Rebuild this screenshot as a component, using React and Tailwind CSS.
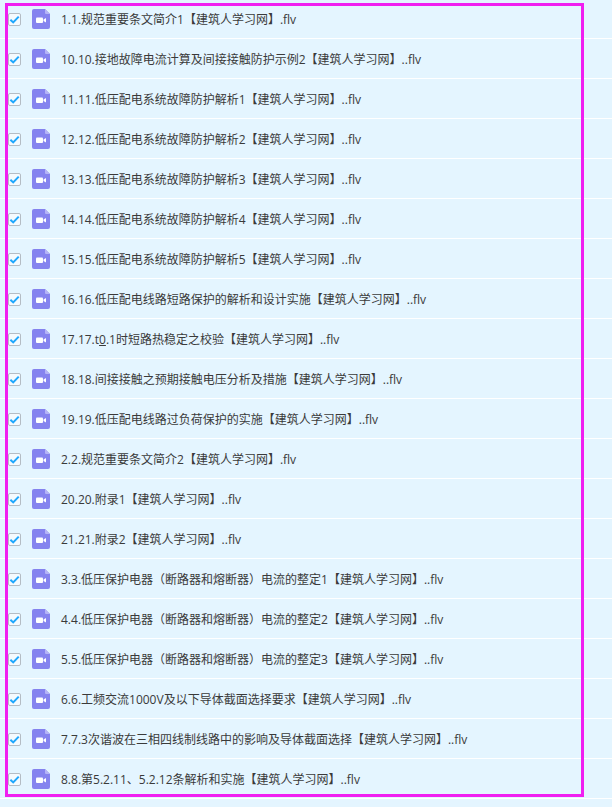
import React from 'react';

const FILES = [
  '1.1.规范重要条文简介1【建筑人学习网】.flv',
  '10.10.接地故障电流计算及间接接触防护示例2【建筑人学习网】..flv',
  '11.11.低压配电系统故障防护解析1【建筑人学习网】..flv',
  '12.12.低压配电系统故障防护解析2【建筑人学习网】..flv',
  '13.13.低压配电系统故障防护解析3【建筑人学习网】..flv',
  '14.14.低压配电系统故障防护解析4【建筑人学习网】..flv',
  '15.15.低压配电系统故障防护解析5【建筑人学习网】..flv',
  '16.16.低压配电线路短路保护的解析和设计实施【建筑人学习网】..flv',
  <>17.17.t<span className="underline">0</span>.1时短路热稳定之校验【建筑人学习网】..flv</>,
  '18.18.间接接触之预期接触电压分析及措施【建筑人学习网】..flv',
  '19.19.低压配电线路过负荷保护的实施【建筑人学习网】..flv',
  '2.2.规范重要条文简介2【建筑人学习网】.flv',
  '20.20.附录1【建筑人学习网】..flv',
  '21.21.附录2【建筑人学习网】..flv',
  '3.3.低压保护电器（断路器和熔断器）电流的整定1【建筑人学习网】..flv',
  '4.4.低压保护电器（断路器和熔断器）电流的整定2【建筑人学习网】..flv',
  '5.5.低压保护电器（断路器和熔断器）电流的整定3【建筑人学习网】..flv',
  '6.6.工频交流1000V及以下导体截面选择要求【建筑人学习网】..flv',
  '7.7.3次谐波在三相四线制线路中的影响及导体截面选择【建筑人学习网】..flv',
  '8.8.第5.2.11、5.2.12条解析和实施【建筑人学习网】..flv',
];

const Checkbox = () => (
  <span className="flex h-[13px] w-[13px] shrink-0 items-center justify-center rounded-[2px] border border-[#b4bcc4] bg-[#f4fafe]">
    <svg viewBox="0 0 12 12" className="h-[11px] w-[11px]">
      <path d="M1.5 6.2 4.6 9.2 10.6 2.8" fill="none" stroke="#1ea7fd" strokeWidth="2.2" />
    </svg>
  </span>
);

const VideoIcon = () => (
  <svg viewBox="0 0 18 20" className="h-5 w-[18px] shrink-0">
    <path d="M2 0H13L18 5V18a2 2 0 0 1-2 2H2a2 2 0 0 1-2-2V2a2 2 0 0 1 2-2Z" fill="#8583ef" />
    <path d="M13 0 18 5H14a1 1 0 0 1-1-1Z" fill="#b5b4f6" />
    <rect x="4" y="8.5" width="7" height="5.5" rx="1" fill="#fff" />
    <path d="M11.5 10.6 14 9V13.6L11.5 12Z" fill="#fff" />
  </svg>
);

export default function App() {
  return (
    <div className="relative h-[807px] overflow-hidden bg-[#e4f5ff] font-['Open_Sans','Noto_Sans_CJK_SC',sans-serif] text-xs text-[#3a3a3a]">
      <div className="-mt-px flex flex-col">
        {FILES.map((name, i) => (
          <div key={i} className="flex h-10 shrink-0 items-center gap-[11px] border-b border-white pl-2 pt-px">
            <Checkbox />
            <VideoIcon />
            <span className="whitespace-nowrap pt-0.5">{name}</span>
          </div>
        ))}
      </div>
      {/* marco de resaltado encima de la lista */}
      <div className="pointer-events-none absolute left-[5px] top-[3px] h-[794px] w-[579px] border-[3px] border-[#f01ff0]" />
    </div>
  );
}
